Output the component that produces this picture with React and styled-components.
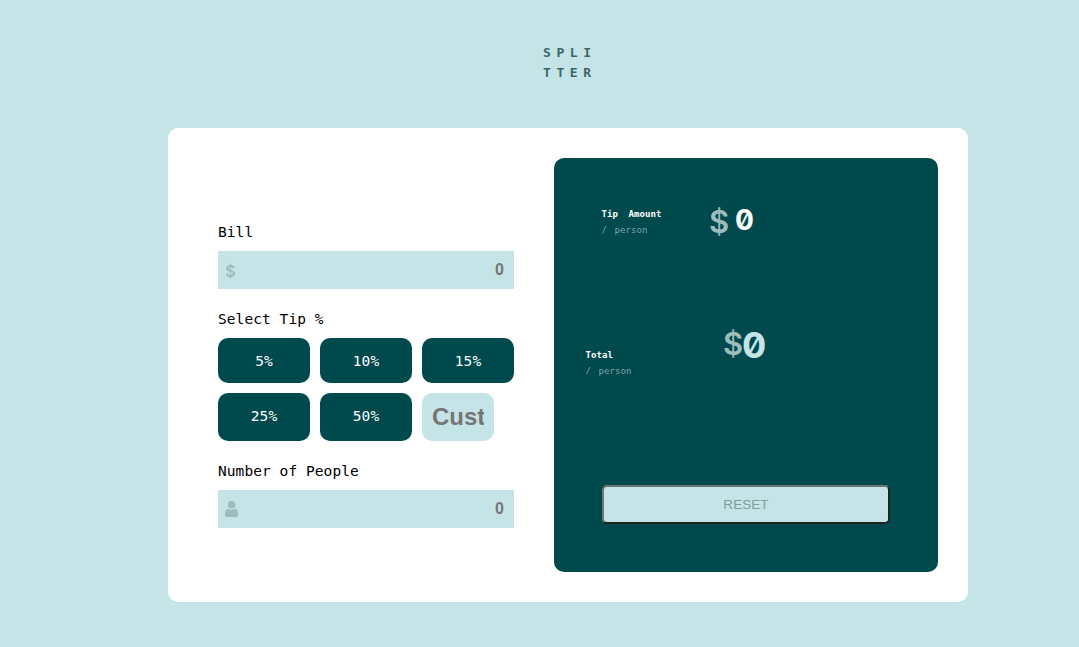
import React from "react";
import styled, { createGlobalStyle } from "styled-components";

const teal = "#00494d";
const pale = "#c5e4e7";

const GlobalStyle = createGlobalStyle`
  * { box-sizing: border-box; }
  body {
    margin: 0;
    background: ${pale};
    font-family: "DejaVu Sans Mono", "Liberation Mono", monospace;
  }
`;

const Page = styled.main`
  min-height: 647px;
  padding: 43px 0 0 168px;
`;

const Logo = styled.h1`
  width: 800px;
  height: 85px;
  margin: 0;
  padding-left: 375px;
  font: 700 13px/20px "DejaVu Sans Mono", monospace;
  letter-spacing: 5.6px;
  color: #3d6666;
`;

const Card = styled.section`
  display: flex;
  justify-content: space-between;
  width: 800px;
  height: 474px;
  padding: 30px 30px 30px 50px;
  border-radius: 10px;
  background: #fff;
`;

const Form = styled.div`
  display: flex;
  flex-direction: column;
  width: 296px;
  padding-top: 64px;
`;

const Label = styled.label`
  height: 29px;
  font-size: 14.5px;
  line-height: 20px;
  letter-spacing: 0.07px;
  color: #000;
`;

const Field = styled.div`
  display: flex;
  align-items: center;
  height: 38px;
  margin-bottom: 20px;
  padding: 0 10px 0 7px;
  background: ${pale};
`;

const Input = styled.input`
  flex: 1;
  min-width: 0;
  padding: 0;
  border: 0;
  outline: 0;
  background: transparent;
  font: 700 16px "Liberation Sans", Arial, sans-serif;
  text-align: right;
  &::placeholder { color: #757575; }
`;

const Dollar = styled.span`
  font: ${(p) => (p.$big ? "600 31px/34px" : "600 16px/20px")} Inter, sans-serif;
  width: ${(p) => (p.$big ? "20px" : "11px")};
  padding-top: ${(p) => (p.$big ? "0" : "1px")};
  text-align: center;
  color: #9ebbbd;
`;

const Tips = styled.div`
  display: grid;
  grid-template-columns: repeat(3, 92px);
  grid-template-rows: 45px 48px;
  gap: 10px;
  margin-bottom: 20px;
`;

const TipButton = styled.button`
  padding: 1px 0 0;
  border: 0;
  border-radius: 10px;
  background: ${teal};
  color: #fff;
  font: 14.5px "DejaVu Sans Mono", monospace;
  letter-spacing: 0.07px;
  &:nth-child(n + 4) { padding: 0 0 3px; }
`;

const CustomTip = styled.input`
  width: 72px;
  padding: 0 10px;
  border: 0;
  border-radius: 10px;
  outline: 0;
  background: ${pale};
  font: 700 24px "Liberation Sans", Arial, sans-serif;
  &::placeholder { color: #757575; }
`;

const Panel = styled.div`
  display: flex;
  flex-direction: column;
  width: 384px;
  height: 414px;
  padding: 47px 48px 48px 31px;
  border-radius: 10px;
  background: ${teal};
`;

const Result = styled.div`
  display: flex;
  align-items: flex-start;
  height: ${(p) => (p.$total ? "158px" : "122px")};
  padding-left: ${(p) => (p.$total ? "0" : "16px")};
`;

const Caption = styled.div`
  width: ${(p) => (p.$total ? "138px" : "108px")};
  padding-top: ${(p) => (p.$total ? "20px" : "1px")};
  padding-left: 0.5px;
  font-size: 9px;
  line-height: 16px;
  letter-spacing: 0.08px;
  color: #fff;
`;

const Title = styled.div`
  font-weight: 700;
  word-spacing: 5px;
`;

const Unit = styled.div`
  color: #7fa4a6;
  word-spacing: 2px;
`;

const Amount = styled.strong`
  margin-left: ${(p) => (p.$total ? "-1px" : "6px")};
  font: 700 ${(p) => (p.$total ? "36px/36px" : "28px/30px")} Inter, sans-serif;
  font-feature-settings: "zero";
  color: ${(p) => (p.$total ? pale : "#fff")};
`;

const Reset = styled.button`
  width: 288px;
  height: 39px;
  margin-left: 17px;
  padding: 0 0 1px;
  border: 2px solid;
  border-color: #6b7777 #222 #222 #6b7777;
  border-radius: 5px;
  background: ${pale};
  color: #7f9c9f;
  font: 13.6px "Liberation Sans", Arial, sans-serif;
`;

const PersonIcon = () => (
  <svg width="13" height="16" viewBox="0 0 13 16" fill="#9ebbbd">
    <circle cx="6.7" cy="3.8" r="3.8" />
    <path d="M3.3 7.7Q6.7 9.6 10 7.7Q13 8.5 13 12.8V14Q13 16 11 16H2Q0 16 0 14V12.8Q0 8.5 3.3 7.7Z" />
  </svg>
);

export default function App() {
  return (
    <Page>
      <GlobalStyle />
      <Logo>SPLI<br />TTER</Logo>
      <Card>
        <Form>
          <Label htmlFor="bill">Bill</Label>
          <Field><Dollar>$</Dollar><Input id="bill" placeholder="0" /></Field>
          <Label as="div">Select Tip %</Label>
          <Tips>
            {[5, 10, 15, 25, 50].map((tip) => <TipButton key={tip}>{tip}%</TipButton>)}
            <CustomTip placeholder="Custom" />
          </Tips>
          <Label htmlFor="people">Number of People</Label>
          <Field><PersonIcon /><Input id="people" placeholder="0" /></Field>
        </Form>
        <Panel>
          <Result>
            <Caption><Title>Tip Amount</Title><Unit>/ person</Unit></Caption>
            <Dollar $big>$</Dollar><Amount>0</Amount>
          </Result>
          <Result $total>
            <Caption $total><Title>Total</Title><Unit>/ person</Unit></Caption>
            <Dollar $big>$</Dollar><Amount $total>0</Amount>
          </Result>
          <Reset>RESET</Reset>
        </Panel>
      </Card>
    </Page>
  );
}
